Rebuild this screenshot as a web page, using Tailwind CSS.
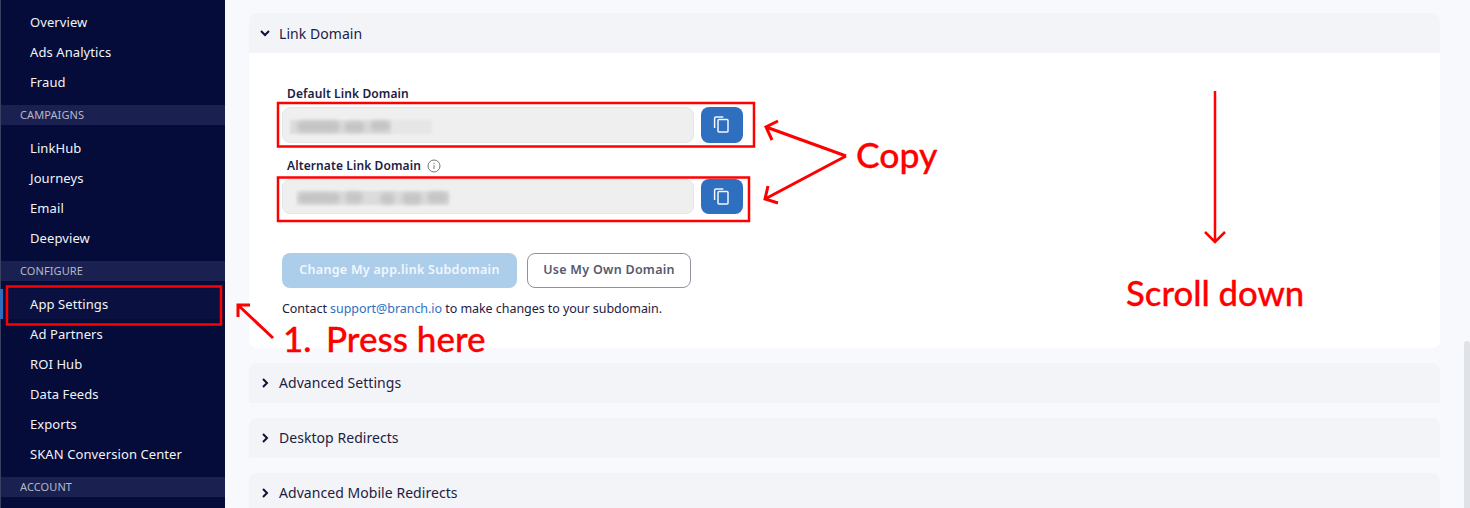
<!DOCTYPE html>
<html lang="en">
<head>
<meta charset="utf-8">
<script src="https://cdn.jsdelivr.net/npm/@tailwindcss/browser@4"></script>
<title>Link Domain</title>
</head>
<body class="relative h-[508px] w-[1470px] overflow-hidden bg-[#f8f9fd] font-['Noto_Sans',sans-serif]">
<div class="flex h-[508px]">
  <aside class="h-full w-[225px] shrink-0 border-l border-[#3a4060] bg-[#050c3a] pt-[7px] text-[13px] tracking-[0.09px] text-[#f2f3f7]">
    <div class="flex h-[30px] items-center pt-[2px] pl-[29px]">Overview</div>
    <div class="flex h-[30px] items-center pt-[2px] pl-[29px]">Ads Analytics</div>
    <div class="flex h-[30px] items-center pt-[2px] pl-[29px]">Fraud</div>
    <div class="mt-2 mb-2 flex h-5 items-center bg-[#1a2150] pl-[19px] text-[11px] tracking-[0.1px] text-[#b4b8c8]">CAMPAIGNS</div>
    <div class="flex h-[30px] items-center pt-[2px] pl-[29px]">LinkHub</div>
    <div class="flex h-[30px] items-center pt-[2px] pl-[29px]">Journeys</div>
    <div class="flex h-[30px] items-center pt-[2px] pl-[29px]">Email</div>
    <div class="flex h-[30px] items-center pt-[2px] pl-[29px]">Deepview</div>
    <div class="mt-2 mb-2 flex h-5 items-center bg-[#1a2150] pl-[19px] text-[11px] tracking-[0.1px] text-[#b4b8c8]">CONFIGURE</div>
    <div class="-ml-px flex h-[30px] items-center border-l-[3px] border-[#2f6fc0] bg-[#0a1140] pt-[2px] pl-[27px]">App Settings</div>
    <div class="flex h-[30px] items-center pt-[2px] pl-[29px]">Ad Partners</div>
    <div class="flex h-[30px] items-center pt-[2px] pl-[29px]">ROI Hub</div>
    <div class="flex h-[30px] items-center pt-[2px] pl-[29px]">Data Feeds</div>
    <div class="flex h-[30px] items-center pt-[2px] pl-[29px]">Exports</div>
    <div class="flex h-[30px] items-center pt-[2px] pl-[29px]">SKAN Conversion Center</div>
    <div class="mt-2 flex h-5 items-center bg-[#1a2150] pl-[19px] text-[11px] tracking-[0.1px] text-[#b4b8c8]">ACCOUNT</div>
  </aside>
  <main class="flex min-w-0 flex-1 flex-col gap-[15px] pt-[13px] pr-[30px] pl-6 text-[#1c2143]">
    <section class="shrink-0 overflow-hidden rounded-lg bg-white">
      <div class="flex h-10 items-center gap-[9px] bg-[#f3f4f8] pl-[11px] text-[14px] tracking-[0.05px]">
        <svg class="h-[10px] w-[10px]" viewBox="0 0 10 10" fill="none" stroke="#0d1236" stroke-width="2"><path d="M1 3l4 4 4-4"/></svg>
        <span>Link Domain</span>
      </div>
      <div class="h-[295px] pt-[33px] pl-[33px]">
        <div class="pt-px pl-[5px] text-[12px] leading-[14px] font-semibold tracking-[0.1px] text-[#1c2143]">Default Link Domain</div>
        <div class="mt-[6px] flex gap-[7px]">
          <div class="relative h-9 w-[412px] rounded-lg border border-[#e4e6ea] bg-[#efefef]">
            <div class="absolute top-[12px] left-[7px] h-[14px] w-[102px] bg-[#dcdcdc] blur-[1px]"></div>
            <div class="absolute top-[12px] left-[109px] h-[14px] w-[40px] bg-[#e6e6e6] blur-[1px]"></div>
            <div class="absolute top-[13px] left-[14px] h-[11px] w-[43px] rounded-full bg-[#c4c4c4] blur-[2px]"></div>
            <div class="absolute top-[14px] left-[61px] h-[10px] w-[21px] rounded-full bg-[#c4c4c4] blur-[2px]"></div>
            <div class="absolute top-[13px] left-[87px] h-[10px] w-[20px] rounded-full bg-[#c4c4c4] blur-[2px]"></div>
          </div>
          <div class="flex h-9 w-[42px] items-center justify-center rounded-lg bg-[#2f6fc0]">
            <svg class="h-5 w-5" viewBox="0 0 20 20" fill="none" stroke="#f4f7fb" stroke-width="1.5"><path d="M2.6 13V3.2A1.2 1.2 0 0 1 3.8 2h7.5"/><rect x="6" y="4.5" width="10" height="12.5" rx="1"/></svg>
          </div>
        </div>
        <div class="mt-[15px] flex items-center gap-[6px] pt-px pl-[5px] text-[12px] leading-[14px] font-semibold tracking-[0.1px]">
          <span>Alternate Link Domain</span>
          <svg class="h-[14px] w-[14px]" viewBox="0 0 14 14" fill="none" stroke="#71757f"><circle cx="7" cy="7" r="6"/><path d="M7 6.2v3.8M7 3.8v1.2" /></svg>
        </div>
        <div class="mt-[6px] flex gap-[7px]">
          <div class="relative h-[35px] w-[412px] rounded-lg border border-[#e4e6ea] bg-[#efefef]">
            <div class="absolute top-[11px] left-[14px] h-[14px] w-[152px] bg-[#dcdcdc] blur-[1px]"></div>
            <div class="absolute top-[13px] left-[15px] h-[10px] w-[42px] rounded-full bg-[#c4c4c4] blur-[2px]"></div>
            <div class="absolute top-[12px] left-[62px] h-[11px] w-[18px] rounded-full bg-[#c6c6c6] blur-[2px]"></div>
            <div class="absolute top-[13px] left-[97px] h-[11px] w-[15px] rounded-full bg-[#c6c6c6] blur-[2px]"></div>
            <div class="absolute top-[13px] left-[119px] h-[11px] w-[20px] rounded-full bg-[#c6c6c6] blur-[2px]"></div>
            <div class="absolute top-[12px] left-[144px] h-[11px] w-[21px] rounded-full bg-[#c6c6c6] blur-[2px]"></div>
          </div>
          <div class="flex h-[35px] w-[42px] items-center justify-center rounded-lg bg-[#2f6fc0]">
            <svg class="h-5 w-5" viewBox="0 0 20 20" fill="none" stroke="#f4f7fb" stroke-width="1.5"><path d="M2.6 13V3.2A1.2 1.2 0 0 1 3.8 2h7.5"/><rect x="6" y="4.5" width="10" height="12.5" rx="1"/></svg>
          </div>
        </div>
        <div class="mt-[39px] flex gap-[10px] text-[12.5px] font-semibold tracking-[0.28px]">
          <button class="h-[35px] w-[235px] rounded-lg bg-[#acceeb] text-[#f2f7fc]">Change My app.link Subdomain</button>
          <button class="h-[35px] w-[164px] rounded-lg border border-[#8f939d] bg-white text-[#545a70]">Use My Own Domain</button>
        </div>
        <p class="mt-3 text-[12.5px] leading-[17px] tracking-[-0.05px] text-[#1c2143]">Contact <a class="text-[#2f6fc0]">support@branch.io</a> to make changes to your subdomain.</p>
      </div>
    </section>
    <section class="flex h-10 shrink-0 items-center gap-[9px] rounded-t-lg bg-[#f3f4f8] pb-px pl-[11px] text-[14px] tracking-[0.05px]">
      <svg class="h-[10px] w-[10px]" viewBox="0 0 10 10" fill="none" stroke="#0d1236" stroke-width="2"><path d="M3 1l4 4-4 4"/></svg>
      <span>Advanced Settings</span>
    </section>
    <section class="flex h-10 shrink-0 items-center gap-[9px] rounded-t-lg bg-[#f3f4f8] pb-px pl-[11px] text-[14px] tracking-[0.05px]">
      <svg class="h-[10px] w-[10px]" viewBox="0 0 10 10" fill="none" stroke="#0d1236" stroke-width="2"><path d="M3 1l4 4-4 4"/></svg>
      <span>Desktop Redirects</span>
    </section>
    <section class="flex h-10 shrink-0 items-center gap-[9px] rounded-t-lg bg-[#f3f4f8] pb-px pl-[11px] text-[14px] tracking-[0.05px]">
      <svg class="h-[10px] w-[10px]" viewBox="0 0 10 10" fill="none" stroke="#0d1236" stroke-width="2"><path d="M3 1l4 4-4 4"/></svg>
      <span>Advanced Mobile Redirects</span>
    </section>
  </main>
</div>

<div class="absolute top-[341px] left-[1464px] h-[167px] w-[6px] rounded-t-sm bg-[#dfe2e6]"></div>

<svg class="absolute top-0 left-0 h-[508px] w-[1470px]" viewBox="0 0 1470 508" fill="none" stroke="#ff0000" stroke-width="2.5">
  <rect x="278" y="103" width="476" height="43.5"/>
  <rect x="278" y="177.5" width="471" height="43.5"/>
  <rect x="7" y="286.5" width="214" height="38"/>
  <path d="M846 156L766 127M778 121L766 127L772 140" stroke-width="3"/>
  <path d="M846 156L765 199M768 186L765 199L778 203" stroke-width="3"/>
  <path d="M273 338L238 305M238 317L238 305L250 305" stroke-width="3"/>
  <path d="M1215 91V242M1205 232L1215 242L1225 232" stroke-width="2.5"/>
</svg>
<div class="absolute top-[133px] left-[856px] text-[35.5px] leading-[44px] font-medium text-[#ff0000] font-['Lato',sans-serif] [-webkit-text-stroke:0.3px_#ff0000]">Copy</div>
<div class="absolute top-[316px] left-[283px] text-[35px] leading-[44px] font-medium text-[#ff0000] font-['Lato',sans-serif] [-webkit-text-stroke:0.3px_#ff0000]">1.</div>
<div class="absolute top-[316px] left-[326px] text-[35px] leading-[44px] font-medium text-[#ff0000] font-['Lato',sans-serif] [-webkit-text-stroke:0.3px_#ff0000]">Press here</div>
<div class="absolute top-[271px] left-[1126px] text-[34.7px] leading-[44px] font-medium text-[#ff0000] font-['Lato',sans-serif] [-webkit-text-stroke:0.3px_#ff0000]">Scroll down</div>
</body>
</html>
